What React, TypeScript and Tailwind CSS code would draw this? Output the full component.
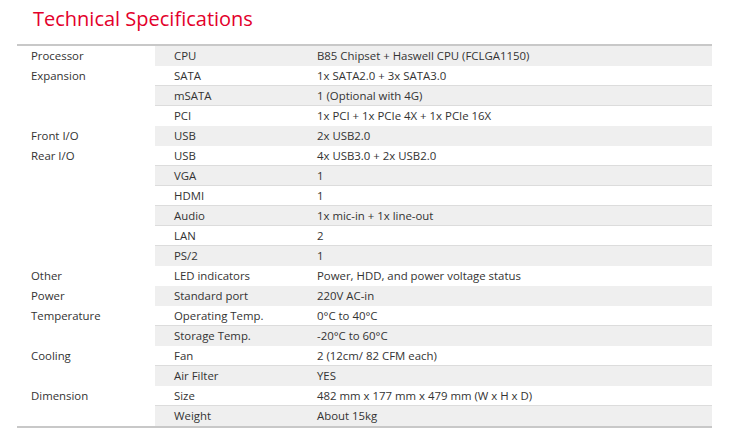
const groups: { label: string; rows: [string, string][] }[] = [
  { label: "Processor", rows: [["CPU", "B85 Chipset + Haswell CPU (FCLGA1150)"]] },
  {
    label: "Expansion",
    rows: [
      ["SATA", "1x SATA2.0 + 3x SATA3.0"],
      ["mSATA", "1 (Optional with 4G)"],
      ["PCI", "1x PCI + 1x PCIe 4X + 1x PCIe 16X"],
    ],
  },
  { label: "Front I/O", rows: [["USB", "2x USB2.0"]] },
  {
    label: "Rear I/O",
    rows: [
      ["USB", "4x USB3.0 + 2x USB2.0"],
      ["VGA", "1"],
      ["HDMI", "1"],
      ["Audio", "1x mic-in + 1x line-out"],
      ["LAN", "2"],
      ["PS/2", "1"],
    ],
  },
  { label: "Other", rows: [["LED indicators", "Power, HDD, and power voltage status"]] },
  { label: "Power", rows: [["Standard port", "220V AC-in"]] },
  {
    label: "Temperature",
    rows: [
      ["Operating Temp.", "0°C to 40°C"],
      ["Storage Temp.", "-20°C to 60°C"],
    ],
  },
  {
    label: "Cooling",
    rows: [
      ["Fan", "2 (12cm/ 82 CFM each)"],
      ["Air Filter", "YES"],
    ],
  },
  {
    label: "Dimension",
    rows: [
      ["Size", "482 mm x 177 mm x 479 mm (W x H x D)"],
      ["Weight", "About 15kg"],
    ],
  },
]

export default function App() {
  let idx = 0
  return (
    <div className="w-[733px] h-[438px] bg-white font-['Open_Sans',sans-serif] text-[#333]">
      <h2 className="pl-[33px] pt-[5px] text-[20px] leading-[28px] text-[#e3002b]">Technical Specifications</h2>
      <div className="ml-[17px] mt-[11px] w-[695px] border-t-2 border-b-2 border-[#c8c8c8] text-[11.4px]">
        {groups.map((g) => (
          <div key={g.label} className="flex">
            <div className="w-[138px] shrink-0 pl-[14px] leading-[19px]">{g.label}</div>
            <div className="flex-1">
              {g.rows.map(([k, v]) => {
                const gray = idx++ % 2 === 0
                return (
                  <div
                    key={k + v}
                    className={`flex h-[20px] items-center border-b border-[#dcdcdc] last:border-b-0 ${gray ? "bg-[#efefef]" : "bg-white"}`}
                  >
                    <div className="w-[143px] shrink-0 pl-[19px]">{k}</div>
                    <div className="pl-[19px]">{v}</div>
                  </div>
                )
              })}
            </div>
          </div>
        ))}
      </div>
    </div>
  )
}
